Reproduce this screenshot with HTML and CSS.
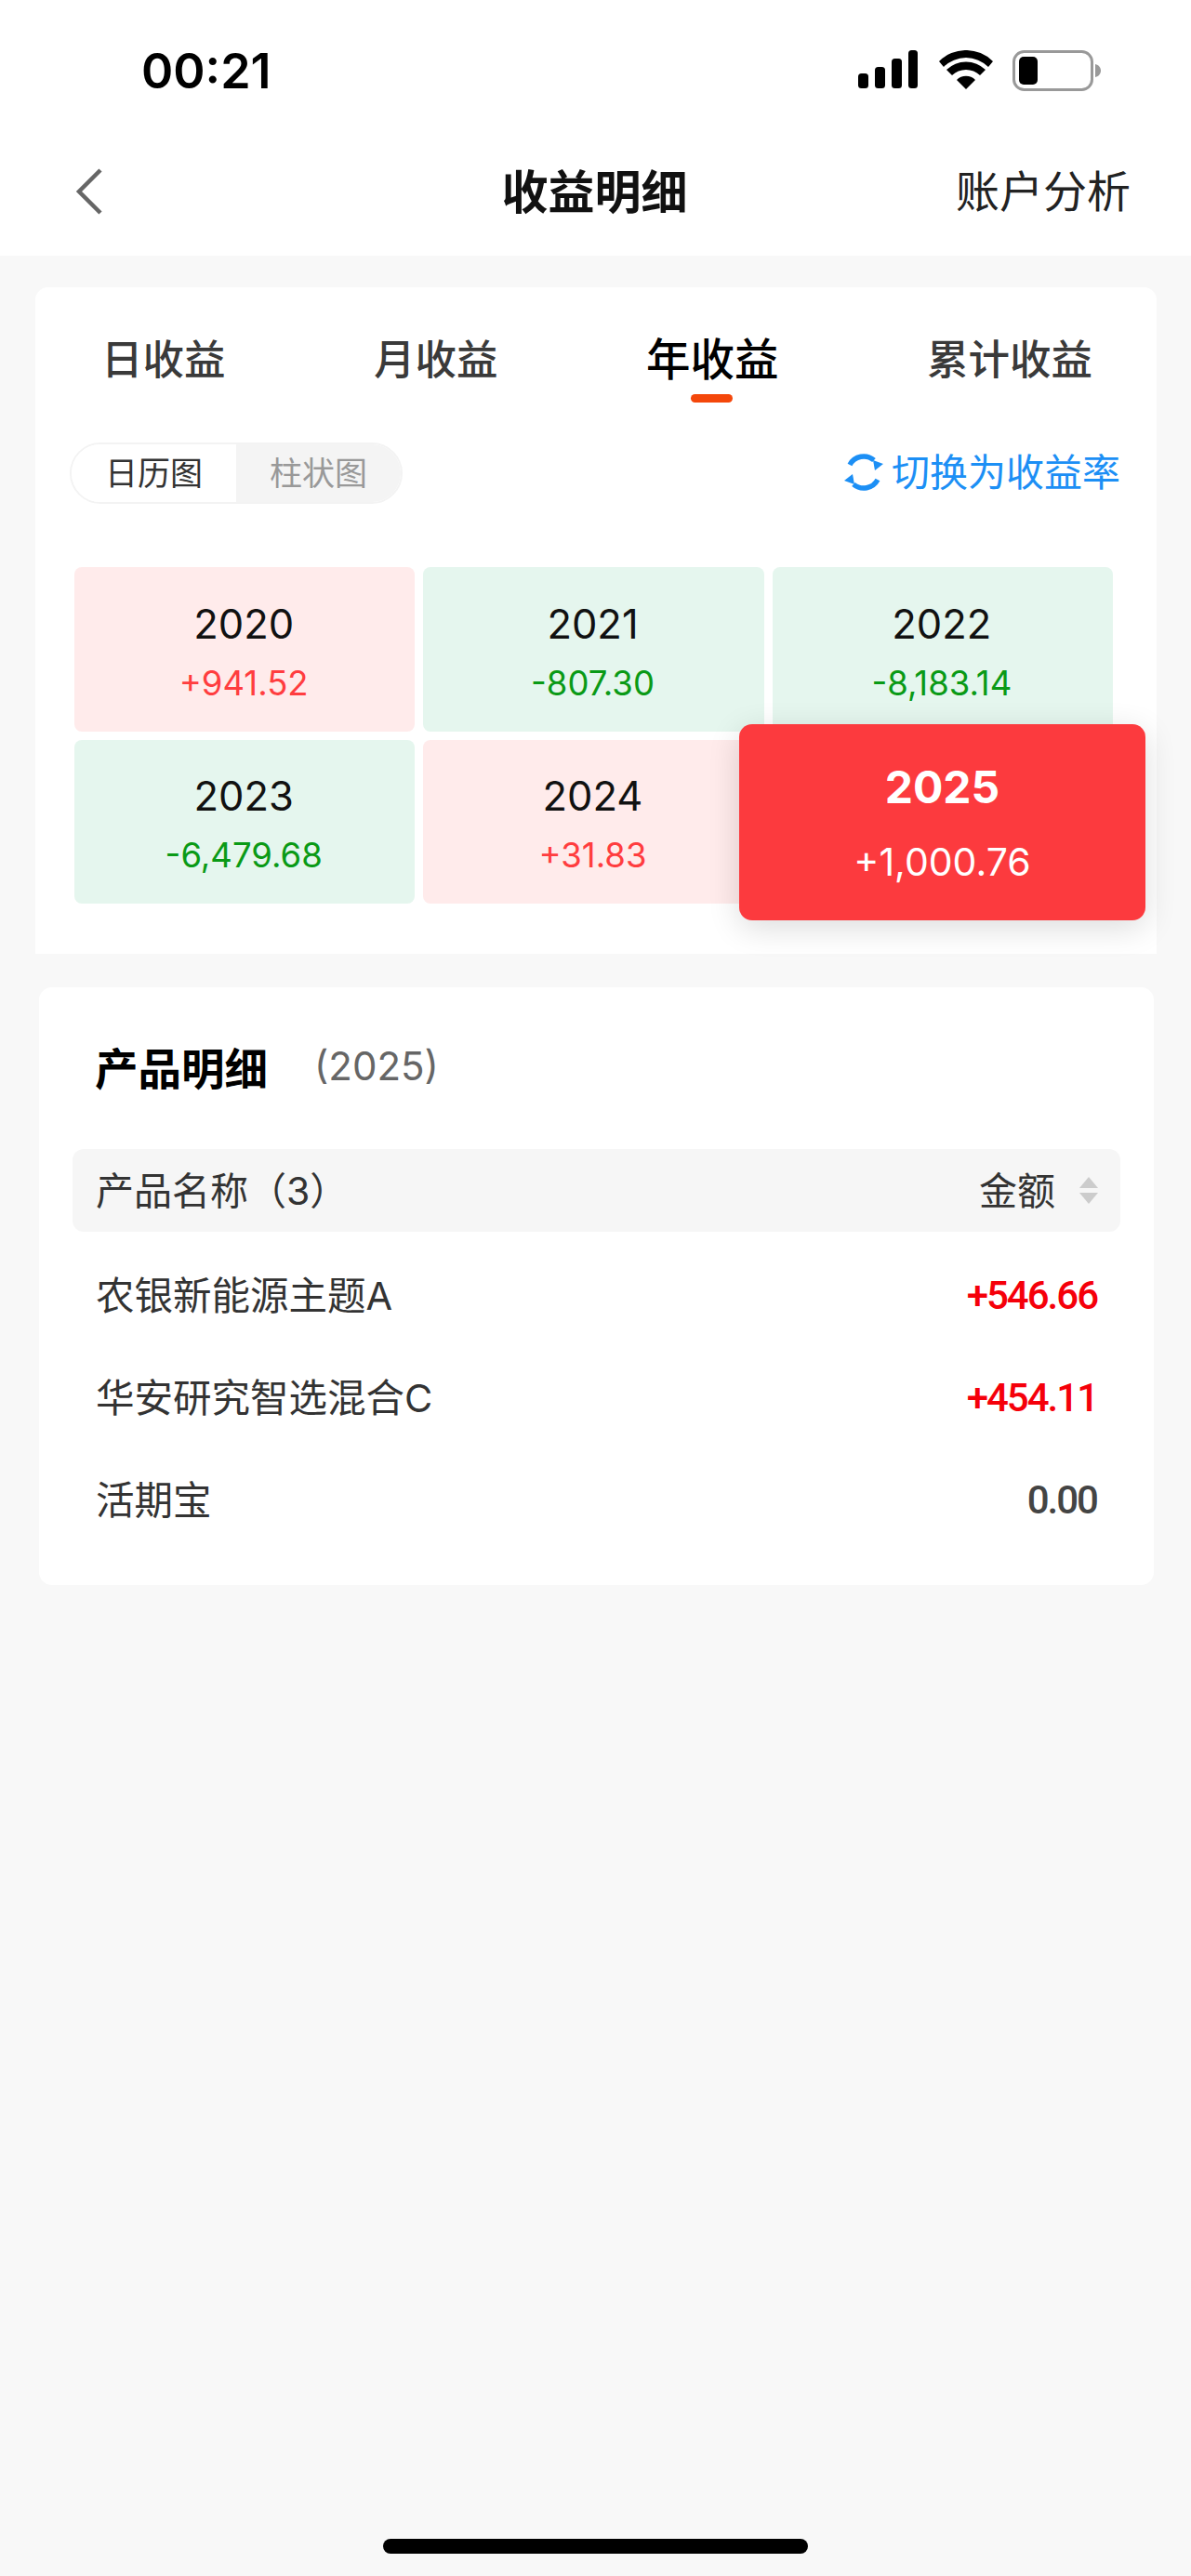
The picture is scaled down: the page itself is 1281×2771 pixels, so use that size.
FILE: index.html
```html
<!DOCTYPE html>
<html lang="zh-CN">
<head>
  <meta charset="UTF-8">
  <meta name="viewport" content="width=device-width, initial-scale=1.0">
  <title>收益明细</title>
  <link rel="stylesheet" href="styles.css">
</head>
<body>
  <div class="page">
    <!-- Status + nav -->
    <div class="top-bar">
      <div class="status-bar">
        <div class="status-time">00:21</div>
        <div class="status-icons">
          <svg class="icon-signal" width="64" height="41" viewBox="0 0 64 41">
            <rect x="0" y="25" width="11" height="16" rx="3.5"/>
            <rect x="18" y="18" width="11" height="23" rx="3.5"/>
            <rect x="36" y="9" width="11" height="32" rx="3.5"/>
            <rect x="54" y="0" width="10" height="41" rx="3.5"/>
          </svg>
          <svg class="icon-wifi" width="58" height="42" viewBox="0 0 58 42">
            <path d="M29 42 L19 32 A14 14 0 0 1 39 32 Z"/>
            <path d="M14 27 L8 21 A30 30 0 0 1 50 21 L44 27 A21.5 21.5 0 0 0 14 27 Z"/>
            <path d="M5 18 L0 12 A41 41 0 0 1 58 12 L53 18 A34 34 0 0 0 5 18 Z"/>
          </svg>
          <svg class="icon-battery" width="95" height="44" viewBox="0 0 95 44">
            <rect x="1.5" y="1.5" width="84" height="41" rx="11" fill="#fff" stroke="#999" stroke-width="3"/>
            <rect x="7" y="7" width="20" height="30" rx="5" fill="#000"/>
            <path d="M89 15 C93 16 95 19 95 22 C95 25 93 28 89 29 Z" fill="#999"/>
          </svg>
        </div>
      </div>
      <div class="nav-bar">
        <svg class="nav-back" width="30" height="52" viewBox="0 0 30 52">
          <path d="M27 3 L4 26 L27 49" fill="none" stroke="#666" stroke-width="4.5"/>
        </svg>
        <div class="nav-title">收益明细</div>
        <div class="nav-action">账户分析</div>
      </div>
    </div>

    <!-- Earnings calendar -->
    <div class="earnings-card">
      <div class="tabs">
        <div class="tab">日收益</div>
        <div class="tab">月收益</div>
        <div class="tab tab-active">年收益</div>
        <div class="tab">累计收益</div>
      </div>

      <div class="tools">
        <div class="toggle">
          <div class="toggle-item toggle-on">日历图</div>
          <div class="toggle-item">柱状图</div>
        </div>
        <div class="switch-link">
          <svg width="44" height="42" viewBox="0 0 44 42">
            <path d="M7 13 A17 17 0 0 1 33 8" fill="none" stroke="#1c8ff5" stroke-width="5.5"/>
            <path d="M43 12 L32 8 L34 19 Z" fill="#1c8ff5"/>
            <path d="M37 29 A17 17 0 0 1 11 34" fill="none" stroke="#1c8ff5" stroke-width="5.5"/>
            <path d="M1 30 L12 34 L10 23 Z" fill="#1c8ff5"/>
          </svg>
          <span>切换为收益率</span>
        </div>
      </div>

      <div class="year-grid">
        <div class="year-cell up"><div class="year">2020</div><div class="amount">+941.52</div></div>
        <div class="year-cell down"><div class="year">2021</div><div class="amount">-807.30</div></div>
        <div class="year-cell down"><div class="year">2022</div><div class="amount">-8,183.14</div></div>
        <div class="year-cell down"><div class="year">2023</div><div class="amount">-6,479.68</div></div>
        <div class="year-cell up"><div class="year">2024</div><div class="amount">+31.83</div></div>
        <div class="year-selected"><div class="year">2025</div><div class="amount">+1,000.76</div></div>
      </div>
    </div>

    <!-- Product list -->
    <div class="product-card">
      <div class="product-head">
        <span class="product-title">产品明细</span>
        <span class="product-year">(2025)</span>
      </div>
      <div class="product-columns">
        <span>产品名称（3）</span>
        <div class="sort-col">
          <span>金额</span>
          <div class="sort-icon">
            <svg width="20" height="30" viewBox="0 0 20 30">
              <path d="M10 0 L20 12 L0 12 Z" fill="#ccc"/>
              <path d="M0 17 L20 17 L10 29 Z" fill="#ccc"/>
            </svg>
          </div>
        </div>
      </div>
      <div class="product-row">
        <span class="product-name">农银新能源主题A</span>
        <span class="product-value gain">+546.66</span>
      </div>
      <div class="product-row">
        <span class="product-name">华安研究智选混合C</span>
        <span class="product-value gain">+454.11</span>
      </div>
      <div class="product-row">
        <span class="product-name">活期宝</span>
        <span class="product-value">0.00</span>
      </div>
    </div>

    <div class="home-indicator"></div>
  </div>
</body>
</html>
```

FILE: styles.css
```css
/* General Reset */
* {
  margin: 0;
  padding: 0;
  box-sizing: border-box;
}

body {
  background: #f8f8f8;
  font-family: Inter, 'Noto Sans CJK SC', sans-serif;
  color: #333;
}

.page {
  display: flex;
  flex-direction: column;
  min-height: 100vh;
}

/* Top bar */
.top-bar {
  background: #fff;
  height: 275px;
}

.status-bar {
  display: flex;
  justify-content: space-between;
  align-items: flex-start;
  padding: 54px 97px 0 152px;
  height: 142px;
}

.status-time {
  font-size: 52px;
  line-height: 46px;
  font-weight: 600;
  color: #000;
}

.status-icons {
  display: flex;
  align-items: flex-start;
}

.icon-signal {
  margin-right: 23px;
}

.icon-wifi {
  margin-right: 21px;
}

.nav-bar {
  position: relative;
  display: flex;
  justify-content: space-between;
  align-items: center;
  height: 96px;
  padding: 0 65px 0 81px;
  margin-top: 15px;
}

.nav-back {
  margin-top: 2px;
}

.nav-title {
  position: absolute;
  left: -2px;
  right: 0;
  top: 20px;
  text-align: center;
  font-size: 50px;
  line-height: 60px;
  font-weight: 700;
  color: #111;
}

.nav-action {
  font-size: 47px;
  line-height: 60px;
  margin-top: 2px;
  color: #222;
}

/* Earnings card */
.earnings-card {
  background: #fff;
  margin: 34px 37px 0 38px;
  border-radius: 14px 14px 0 0;
  padding: 48px 0 54px;
}

.tabs {
  display: flex;
  justify-content: space-between;
  padding: 0 69px 0 71px;
}

.tab {
  position: relative;
  font-size: 44.5px;
  line-height: 60px;
  font-weight: 500;
  color: #3a3a3a;
}

.tab-active {
  font-size: 47.5px;
  font-weight: 500;
  color: #000;
}

.tab-active::after {
  content: "";
  position: absolute;
  left: 50%;
  bottom: -16px;
  width: 45px;
  height: 9px;
  margin-left: -23px;
  border-radius: 5px;
  background: #f4470b;
}

.tools {
  display: flex;
  justify-content: space-between;
  align-items: center;
  margin-top: 59px;
  padding: 0 39px 0 37px;
}

.toggle {
  display: flex;
  width: 358px;
  height: 66px;
  border: 2px solid #f3f3f3;
  border-radius: 33px;
  overflow: hidden;
  font-size: 35px;
  color: #999;
}

.toggle-item {
  flex: 1;
  display: flex;
  justify-content: center;
  align-items: center;
  padding-bottom: 6px;
  background: #f4f4f4;
}

.toggle-on {
  background: #fff;
  color: #333;
}

.switch-link {
  display: flex;
  align-items: center;
  gap: 8px;
  font-size: 41px;
  line-height: 60px;
  color: #1c8ff5;
}

.switch-link span {
  margin-top: -3px;
}

.switch-link svg {
  margin-top: -2px;
}

.year-grid {
  position: relative;
  display: grid;
  grid-template-columns: repeat(3, 1fr);
  grid-template-rows: 177px 176px;
  gap: 9px;
  margin: 68px 47px 0 42px;
}

.year-cell {
  display: flex;
  flex-direction: column;
  justify-content: center;
  align-items: center;
  padding: 4px 2px 0 0;
  border-radius: 8px;
}

.year {
  font-size: 43.5px;
  line-height: 56px;
  color: #111;
}

.amount {
  font-size: 36.5px;
  line-height: 48px;
  margin-top: 12px;
}

.up {
  background: #ffebeb;
}

.up .amount {
  color: #ff3d3f;
}

.down {
  background: #e5f6ee;
}

.down .amount {
  color: #0a9a16;
}

/* Selected year floats over the grid */
.year-selected {
  position: absolute;
  left: 715px;
  top: 169px;
  width: 437px;
  height: 211px;
  display: flex;
  flex-direction: column;
  justify-content: center;
  align-items: center;
  border-radius: 14px;
  background: #fc3a3e;
  box-shadow: 0 8px 34px rgba(0, 0, 0, 0.14);
}

.year-selected .year {
  font-size: 48px;
  font-weight: 700;
  color: #fff;
}

.year-selected .amount {
  font-size: 41px;
  margin-top: 28px;
  color: #fff;
}

/* Product card */
.product-card {
  background: #fff;
  margin: 36px 40px 0 42px;
  border-radius: 14px;
  padding: 0 36px 37px;
  height: 643px;
}

.product-head {
  display: flex;
  align-items: center;
  height: 174px;
  padding: 0 0 6px 24px;
}

.product-title {
  font-size: 46.5px;
  font-weight: 700;
  color: #000;
}

.product-year {
  font-size: 42px;
  color: #666;
  margin-left: 50px;
}

.product-columns {
  display: flex;
  justify-content: space-between;
  align-items: center;
  height: 89px;
  padding: 0 0 6px 25px;
  border-radius: 12px;
  background: #f6f6f6;
  font-size: 41px;
  color: #333;
  margin-bottom: 12px;
}

.sort-col {
  display: flex;
  align-items: center;
  gap: 26px;
  padding-right: 24px;
}

.sort-icon {
  display: flex;
  margin-top: 6px;
}

.product-row {
  display: flex;
  justify-content: space-between;
  align-items: center;
  height: 110px;
  padding: 0 25px;
}

.product-name {
  font-size: 41.5px;
  color: #333;
  margin-top: -3px;
}

.product-value {
  font-family: Roboto, sans-serif;
  font-size: 42px;
  font-weight: 500;
  letter-spacing: -2px;
  color: #444;
  margin-top: 2px;
}

.gain {
  color: #f5000a;
}

.home-indicator {
  width: 457px;
  height: 16px;
  margin: auto auto 24px;
  border-radius: 8px;
  background: #000;
}
```
